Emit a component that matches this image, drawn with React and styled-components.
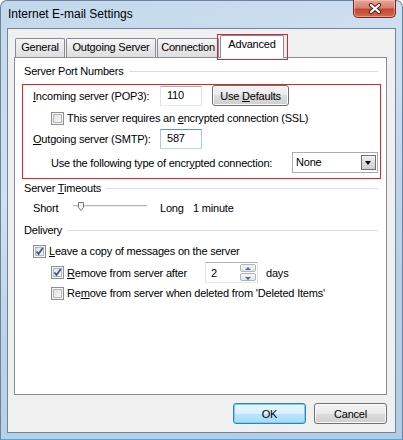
import styled, { createGlobalStyle } from "styled-components";

const GlobalStyle = createGlobalStyle`
  html, body { margin: 0; padding: 0; background: #fff; }
  body {
    font-family: "Liberation Sans", Arial, sans-serif;
    font-size: 11px;
    letter-spacing: -0.2px;
    color: #000;
  }
  * { box-sizing: border-box; }
`;

const tabs = [
  { label: "General", width: 50 },
  { label: "Outgoing Server", width: 90 },
  { label: "Connection", width: 62 },
  { label: "Advanced", width: 64, active: true },
];

function Check({ checked }) {
  return (
    <CheckBox>
      {checked && (
        <svg width="11" height="11" viewBox="0 0 11 11">
          <path d="M2.5 5.5 L4.5 8 L8.8 2" fill="none" stroke="#3e5a8f" strokeWidth="1.8" />
        </svg>
      )}
    </CheckBox>
  );
}

function Slider() {
  return (
    <svg width="75" height="16" viewBox="0 0 75 16">
      <rect x="0" y="5" width="74" height="1" fill="#b9b9b9" />
      <rect x="0" y="6" width="74" height="1" fill="#e9e9e9" />
      <path d="M5.5 2.5 h5 v5 l-2.5 3 l-2.5 -3 z" fill="#f2f2f2" stroke="#777" />
    </svg>
  );
}

export default function App() {
  return (
    <>
      <GlobalStyle />
      <Window>
        <TitleBar>
          <Title>Internet E-mail Settings</Title>
          <CloseButton>
            <svg width="14" height="11" viewBox="0 0 14 11">
              <path d="M3 2 L11 9 M11 2 L3 9" stroke="#4b2420" strokeWidth="4.2" strokeLinecap="round" />
              <path d="M3 2 L11 9 M11 2 L3 9" stroke="#fff" strokeWidth="2.2" strokeLinecap="round" />
            </svg>
          </CloseButton>
        </TitleBar>
        <Client>
          <TabStrip>
            {tabs.map((t) => (
              <Tab key={t.label} $active={t.active} $width={t.width}>
                {t.label}
              </Tab>
            ))}
          </TabStrip>
          <Panel>
            <GroupHeader $top={6}>
              <span>Server Port Numbers</span>
            </GroupHeader>
            <Highlight>
              <Row $h={21}>
                <FieldLabel>
                  <Key>I</Key>ncoming server (POP3):
                </FieldLabel>
                <TextInput>110</TextInput>
                <PushButton $width={77}>
                  <span>
                    Use <Key>D</Key>efaults
                  </span>
                </PushButton>
              </Row>
              <Row $h={14} $top={5} $indent={18}>
                <Check />
                <CheckText>
                  This server requires an <Key>e</Key>ncrypted connection (SSL)
                </CheckText>
              </Row>
              <Row $h={20} $top={4}>
                <FieldLabel>
                  <Key>O</Key>utgoing server (SMTP):
                </FieldLabel>
                <TextInput $focus>587</TextInput>
              </Row>
              <Row $h={21} $top={3} $indent={18}>
                <FieldLabel $width={241}>
                  Use the following type of encr<Key>y</Key>pted connection:
                </FieldLabel>
                <Select>
                  None
                  <DropButton />
                </Select>
              </Row>
            </Highlight>
            <GroupHeader $top={2}>
              <span>
                Server <Key>T</Key>imeouts
              </span>
            </GroupHeader>
            <Row $h={16} $top={5} $indent={9}>
              <FieldLabel $width={40}>Short</FieldLabel>
              <Slider />
              <FieldLabel $width={33} $left={12}>Long</FieldLabel>
              <span>1 minute</span>
            </Row>
            <GroupHeader $top={7}>
              <span>Delivery</span>
            </GroupHeader>
            <Row $h={14} $top={7} $indent={9}>
              <Check checked />
              <CheckText>
                <Key>L</Key>eave a copy of messages on the server
              </CheckText>
            </Row>
            <Row $h={21} $top={4} $indent={27}>
              <Check checked />
              <CheckText $width={138}>
                <Key>R</Key>emove from server after
              </CheckText>
              <Spin>
                2
                <SpinButtons>
                  <SpinButton $up />
                  <SpinButton />
                </SpinButtons>
              </Spin>
              <CheckText $left={8}>days</CheckText>
            </Row>
            <Row $h={14} $top={3} $indent={27}>
              <Check />
              <CheckText>
                Re<Key>m</Key>ove from server when deleted from 'Deleted Items'
              </CheckText>
            </Row>
          </Panel>
          <ButtonRow>
            <PushButton $width={73} $default>
              <span>OK</span>
            </PushButton>
            <PushButton $width={73}>
              <span>Cancel</span>
            </PushButton>
          </ButtonRow>
        </Client>
      </Window>
    </>
  );
}

const Window = styled.div`
  width: 403px;
  height: 440px;
  display: flex;
  flex-direction: column;
  border: 1px solid #6a849f;
  border-bottom-color: #33b3e6;
  border-radius: 7px 7px 0 0;
  background: linear-gradient(160deg, #c3d8ec 0%, #cfe0f1 35%, #bcd2e8 60%, #b3cbe4 100%);
`;

const TitleBar = styled.div`
  height: 27px;
  display: flex;
  align-items: flex-start;
  flex-shrink: 0;
`;

const Title = styled.div`
  padding-left: 7px;
  line-height: 27px;
  font-size: 12px;
  letter-spacing: 0;
  color: #000;
`;

const CloseButton = styled.div`
  margin: -1px 6px 0 auto;
  width: 43px;
  height: 18px;
  display: flex;
  align-items: center;
  justify-content: center;
  border: 1px solid #6e2a20;
  border-top: none;
  border-radius: 0 0 5px 5px;
  background: linear-gradient(#e6a899 0%, #d88070 45%, #c74633 55%, #cf6a4a 100%);
  box-shadow: inset 0 0 0 1px rgba(255, 210, 200, 0.5);
`;

const Client = styled.div`
  flex: 1;
  margin: 0 6px 6px;
  border: 1px solid #72839a;
  background: #f0f0f0;
  padding: 6px 8px 8px 6px;
  display: flex;
  flex-direction: column;
`;

const TabStrip = styled.div`
  height: 22px;
  display: flex;
  align-items: flex-end;
  gap: 1px;
  padding-left: 1px;
`;

const Tab = styled.div`
  position: relative;
  width: ${(p) => p.$width}px;
  height: ${(p) => (p.$active ? 23 : 19)}px;
  margin-bottom: ${(p) => (p.$active ? -1 : 0)}px;
  z-index: ${(p) => (p.$active ? 1 : 0)};
  border: 1px solid #898c95;
  border-bottom: none;
  border-radius: 2px 2px 0 0;
  background: ${(p) => (p.$active ? "#fff" : "linear-gradient(#f7f7f7, #e9e9e9 50%, #dedede)")};
  display: flex;
  justify-content: center;
  padding-top: 2px;
  line-height: 13px;

  &::after {
    content: "";
    display: ${(p) => (p.$active ? "block" : "none")};
    position: absolute;
    top: -2px;
    left: -4px;
    right: -5px;
    bottom: -2px;
    border: 1px solid #e3232a;
  }
`;

const Panel = styled.div`
  height: 338px;
  flex-shrink: 0;
  background: #fff;
  border: 1px solid #898c95;
  padding: 0 8px 0 9px;
  display: flex;
  flex-direction: column;
`;

const GroupHeader = styled.div`
  height: 14px;
  margin-top: ${(p) => p.$top || 0}px;
  display: flex;
  align-items: center;
  gap: 5px;
  white-space: nowrap;

  &::after {
    content: "";
    flex: 1;
    height: 1px;
    background: #d5dfe5;
  }
`;

const Highlight = styled.div`
  margin: 6px -3px 0 -2px;
  border: 1px solid #e3232a;
  padding: 0 0 5px 10px;
  display: flex;
  flex-direction: column;
`;

const Row = styled.div`
  height: ${(p) => p.$h}px;
  margin-top: ${(p) => p.$top || 0}px;
  padding-left: ${(p) => p.$indent || 0}px;
  display: flex;
  align-items: center;
  white-space: nowrap;
  flex-shrink: 0;
`;

const FieldLabel = styled.span`
  width: ${(p) => p.$width || 127}px;
  margin-left: ${(p) => p.$left || 0}px;
  flex-shrink: 0;
`;

const Key = styled.span`
  text-decoration: underline;
`;

const TextInput = styled.div`
  width: 42px;
  height: 20px;
  flex-shrink: 0;
  border: 1px solid;
  border-color: ${(p) =>
    p.$focus ? "#5c93c4 #a4c9e3 #b7d9ed #a4c9e3" : "#abadb3 #dbdfe6 #e3e9ef #e2e3ea"};
  background: #fff;
  padding: 2px 0 0 6px;
  margin-right: 10px;
`;

const PushButton = styled.div`
  width: ${(p) => p.$width}px;
  height: 21px;
  flex-shrink: 0;
  display: flex;
  align-items: center;
  justify-content: center;
  white-space: nowrap;
  border: 1px solid ${(p) => (p.$default ? "#3c7fb1" : "#707070")};
  border-radius: 3px;
  background: ${(p) =>
    p.$default
      ? "linear-gradient(#eaf6fd 0%, #d9f0fc 50%, #bee6fd 50%, #a7d9f5 100%)"
      : "linear-gradient(#f2f2f2 0%, #ebebeb 50%, #dddddd 50%, #cfcfcf 100%)"};
  box-shadow: inset 0 0 0 1px ${(p) => (p.$default ? "#6fd2f6" : "#fbfbfb")};
`;

const CheckBox = styled.span`
  position: relative;
  width: 13px;
  height: 13px;
  flex-shrink: 0;
  border: 1px solid #8e8f8f;
  background: linear-gradient(135deg, #dcdcdc, #fdfdfd);
  box-shadow: inset 0 0 0 1px #f4f4f4, inset 0 0 0 2px #b3b6ba;
  display: flex;
  align-items: center;
  justify-content: center;

  svg {
    position: relative;
  }
`;

const CheckText = styled.span`
  margin-left: ${(p) => (p.$left !== undefined ? p.$left : 3)}px;
  ${(p) => (p.$width ? `width: ${p.$width}px; flex-shrink: 0;` : "")}
`;

const Select = styled.div`
  position: relative;
  width: 86px;
  height: 21px;
  flex-shrink: 0;
  border: 1px solid #a5acb5;
  background: #fff;
  padding: 3px 0 0 3px;
`;

const DropButton = styled.span`
  position: absolute;
  right: 1px;
  top: 2px;
  width: 15px;
  height: 15px;
  border: 1px solid #6f6f6f;
  background: linear-gradient(#f2f2f2, #dcdcdc 50%, #cfcfcf);

  &::after {
    content: "";
    position: absolute;
    left: 3px;
    top: 5px;
    border-left: 3.5px solid transparent;
    border-right: 3.5px solid transparent;
    border-top: 4px solid #000;
  }
`;

const Spin = styled.div`
  position: relative;
  width: 53px;
  height: 21px;
  flex-shrink: 0;
  border: 1px solid;
  border-color: #abadb3 #dbdfe6 #e3e9ef #e2e3ea;
  background: #fff;
  padding: 4px 0 0 5px;
`;

const SpinButtons = styled.div`
  position: absolute;
  right: 1px;
  top: 1px;
  bottom: 1px;
  width: 16px;
  display: flex;
  flex-direction: column;
  gap: 1px;
`;

const SpinButton = styled.span`
  position: relative;
  flex: 1;
  border: 1px solid #b0b4ba;
  border-radius: 2px;
  background: linear-gradient(#f6f6f6, #e4e6ea);

  &::after {
    content: "";
    position: absolute;
    left: 4px;
    top: ${(p) => (p.$up ? 2 : 3)}px;
    border-left: 3px solid transparent;
    border-right: 3px solid transparent;
    ${(p) => (p.$up ? "border-bottom: 3px solid #4a6aa0;" : "border-top: 3px solid #4a6aa0;")}
  }
`;

const ButtonRow = styled.div`
  margin-top: 8px;
  display: flex;
  justify-content: flex-end;
  gap: 8px;
`;
